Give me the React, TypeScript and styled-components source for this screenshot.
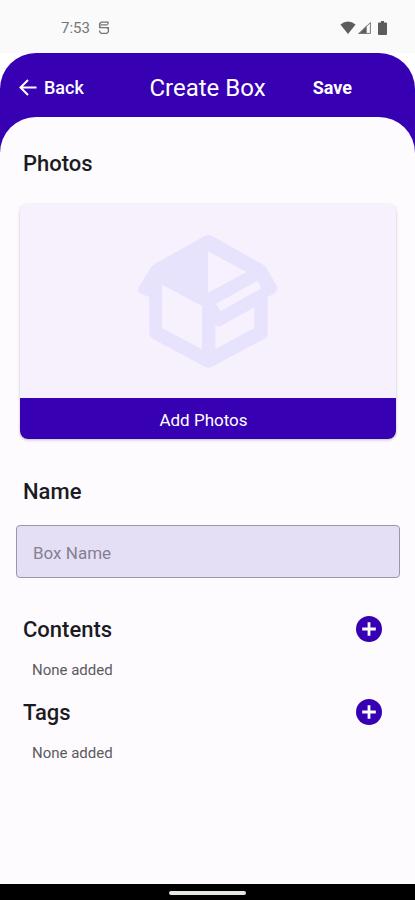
import React from "react";
import styled, { createGlobalStyle } from "styled-components";

const purple = "#3700b3";
const surface = "#fefbff";

const GlobalStyle = createGlobalStyle`
  *, *::before, *::after { box-sizing: border-box; }
  body { margin: 0; background: #ffffff; }
  body, button, input { font-family: Roboto, "Liberation Sans", sans-serif; }
  h1, h2, p { margin: 0; }
  button { border: 0; padding: 0; background: none; color: inherit; cursor: pointer; }
`;

const Screen = styled.div`
  display: flex;
  flex-direction: column;
  min-height: 100vh;
`;

const StatusBar = styled.div`
  display: flex;
  align-items: center;
  justify-content: space-between;
  height: 53px;
  padding: 3px 28px 0 61px;
  background: #fafafa;
  color: #757575;
  font-size: 15px;
  line-height: 20px;
`;

const StatusGroup = styled.div<{ $gap: number }>`
  display: flex;
  align-items: center;
  gap: ${(p) => p.$gap}px;
`;

const Shell = styled.div`
  flex: 1;
  display: flex;
  flex-direction: column;
  border-radius: 36px 36px 0 0;
  background: ${purple};
`;

const Header = styled.header`
  display: grid;
  grid-template-columns: 1fr auto 1fr;
  align-items: center;
  height: 64px;
  padding: 6px 19px 0;
  color: #ffffff;
`;

const BackButton = styled.button`
  justify-self: start;
  display: flex;
  align-items: center;
  gap: 7px;
  font-size: 18px;
  line-height: 24px;
  font-weight: 500;
`;

const Title = styled.h1`
  font-size: 24px;
  line-height: 32px;
  font-weight: 400;
`;

const SaveButton = styled.button`
  justify-self: end;
  margin-right: 44px;
  font-size: 18px;
  line-height: 24px;
  font-weight: 700;
`;

const Sheet = styled.main`
  flex: 1;
  padding: 33px 15px 32px 16px;
  border-radius: 36px 36px 0 0;
  background: ${surface};
`;

const SectionHeading = styled.h2`
  padding-left: 7px;
  color: #1c1b1f;
  font-size: 22px;
  line-height: 28px;
  font-weight: 500;
`;

const PhotoCard = styled.section`
  margin: 26px 4px 39px;
  border-radius: 8px;
  overflow: hidden;
  background: #f7f1fd;
  box-shadow: 0 1px 3px rgba(0, 0, 0, 0.24);
`;

const PhotoPreview = styled.div`
  display: flex;
  justify-content: center;
  align-items: center;
  height: 194px;
`;

const AddPhotosButton = styled.button`
  display: block;
  width: 100%;
  height: 41px;
  padding: 2px 9px 0 0;
  background: ${purple};
  color: #ffffff;
  font-size: 17px;
  line-height: 24px;
`;

const NameInput = styled.input`
  display: block;
  width: 100%;
  height: 53px;
  margin: 19px 0 38px;
  padding: 2px 16px 0;
  border: 1px solid #9b97a5;
  border-radius: 4px;
  background: #e5dff6;
  color: #1c1b1f;
  font-size: 17px;
  &::placeholder { color: #858092; opacity: 1; }
`;

const ListSection = styled.section`
  margin-bottom: 17px;
`;

const ListHeader = styled.div`
  display: flex;
  align-items: start;
  justify-content: space-between;
  padding-right: 17px;
`;

const AddButton = styled.button`
  display: block;
  width: 28px;
  height: 28px;
  svg { display: block; }
`;

const EmptyText = styled.p`
  margin-top: 14px;
  padding-left: 16px;
  color: #5c5a60;
  font-size: 15px;
  line-height: 24px;
`;

const GestureBar = styled.div`
  display: flex;
  justify-content: center;
  height: 16px;
  padding-top: 7px;
  background: #000000;
`;

const GestureHandle = styled.div`
  width: 77px;
  height: 4px;
  border-radius: 2px;
  background: #e4e8e4;
`;

const DebugIcon = () => (
  <svg width="12" height="14" viewBox="0 0 12 14" fill="none" stroke="#757575" strokeWidth="1.3" aria-hidden="true">
    <path d="M10 3.6V1.2H3.2L1.6 2.8V5.2L3 6.6H11M1 6.6H9L10.4 8V10.8L8.8 12.4H3.2L1.6 10.8V9.4M2.5 3.9H9.5" />
  </svg>
);

const WifiIcon = () => (
  <svg width="16" height="14" viewBox="0 0 16 14" aria-hidden="true">
    <path d="M.4 3.4Q8-2.4 15.6 3.4L8 13Z" fill="#5c5c5c" />
  </svg>
);

const SignalIcon = () => (
  <svg width="13" height="14" viewBox="0 0 13 14" aria-hidden="true">
    <path d="M0 13 8.6 4.4V13Z" fill="#5c5c5c" />
    <path d="M1.5 12.4 12.4 1.5V12.4Z" fill="none" stroke="#777" strokeWidth="1" />
  </svg>
);

const BatteryIcon = () => (
  <svg width="9" height="14" viewBox="0 0 9 14" aria-hidden="true">
    <path d="M3 0H6V1.6H8Q9 1.6 9 2.6V13Q9 14 8 14H1Q0 14 0 13V2.6Q0 1.6 1 1.6H3Z" fill="#5c5c5c" />
  </svg>
);

const BackIcon = () => (
  <svg width="18" height="18" viewBox="0 0 18 18" fill="none" stroke="#fff" strokeWidth="2" aria-hidden="true">
    <path d="M17.5 8.5H2M9 1 1.5 8.5 9 16" />
  </svg>
);

const PlusIcon = () => (
  <svg width="28" height="28" viewBox="0 0 28 28" aria-hidden="true">
    <circle cx="14" cy="13" r="13" fill={purple} />
    <path d="M14 6.2V19.8M7.2 13H20.8" stroke="#fff" strokeWidth="2.8" />
  </svg>
);

const OpenBoxIcon = () => (
  <svg width="140" height="134" viewBox="54 40 420 402" fill="#e8e3fd" fillRule="evenodd" aria-hidden="true">
    <path
      d="M254 46Q264 40 276 46L426 130Q436 136 441 144L470 196Q475 208 464 218L443 230V338Q443 348 434 354L276 438Q264 444 254 438L98 354Q88 348 88 338V229L60 218Q51 209 57 198L90 144Q96 135 104 130Z
      M126 192V322L246 386V256Z
      M264 92V216L380 154Z
      M288 250 302 271 422 204V196L412 180Z
      M286 314V385L403 322V260L304 315Q296 319 286 314Z"
    />
  </svg>
);

function EmptyList({ title, label }: { title: string; label: string }) {
  return (
    <ListSection>
      <ListHeader>
        <SectionHeading>{title}</SectionHeading>
        <AddButton type="button" aria-label={label}>
          <PlusIcon />
        </AddButton>
      </ListHeader>
      <EmptyText>None added</EmptyText>
    </ListSection>
  );
}

export default function App() {
  return (
    <Screen>
      <GlobalStyle />
      <StatusBar>
        <StatusGroup $gap={8}>
          <span>7:53</span>
          <DebugIcon />
        </StatusGroup>
        <StatusGroup $gap={2}>
          <WifiIcon />
          <StatusGroup $gap={7}>
            <SignalIcon />
            <BatteryIcon />
          </StatusGroup>
        </StatusGroup>
      </StatusBar>
      <Shell>
        <Header>
          <BackButton type="button">
            <BackIcon />
            Back
          </BackButton>
          <Title>Create Box</Title>
          <SaveButton type="button">Save</SaveButton>
        </Header>
        <Sheet>
          <SectionHeading>Photos</SectionHeading>
          <PhotoCard>
            <PhotoPreview>
              <OpenBoxIcon />
            </PhotoPreview>
            <AddPhotosButton type="button">Add Photos</AddPhotosButton>
          </PhotoCard>
          <SectionHeading>
            <label htmlFor="box-name">Name</label>
          </SectionHeading>
          <NameInput id="box-name" type="text" placeholder="Box Name" />
          <EmptyList title="Contents" label="Add contents" />
          <EmptyList title="Tags" label="Add tags" />
        </Sheet>
      </Shell>
      <GestureBar>
        <GestureHandle />
      </GestureBar>
    </Screen>
  );
}
